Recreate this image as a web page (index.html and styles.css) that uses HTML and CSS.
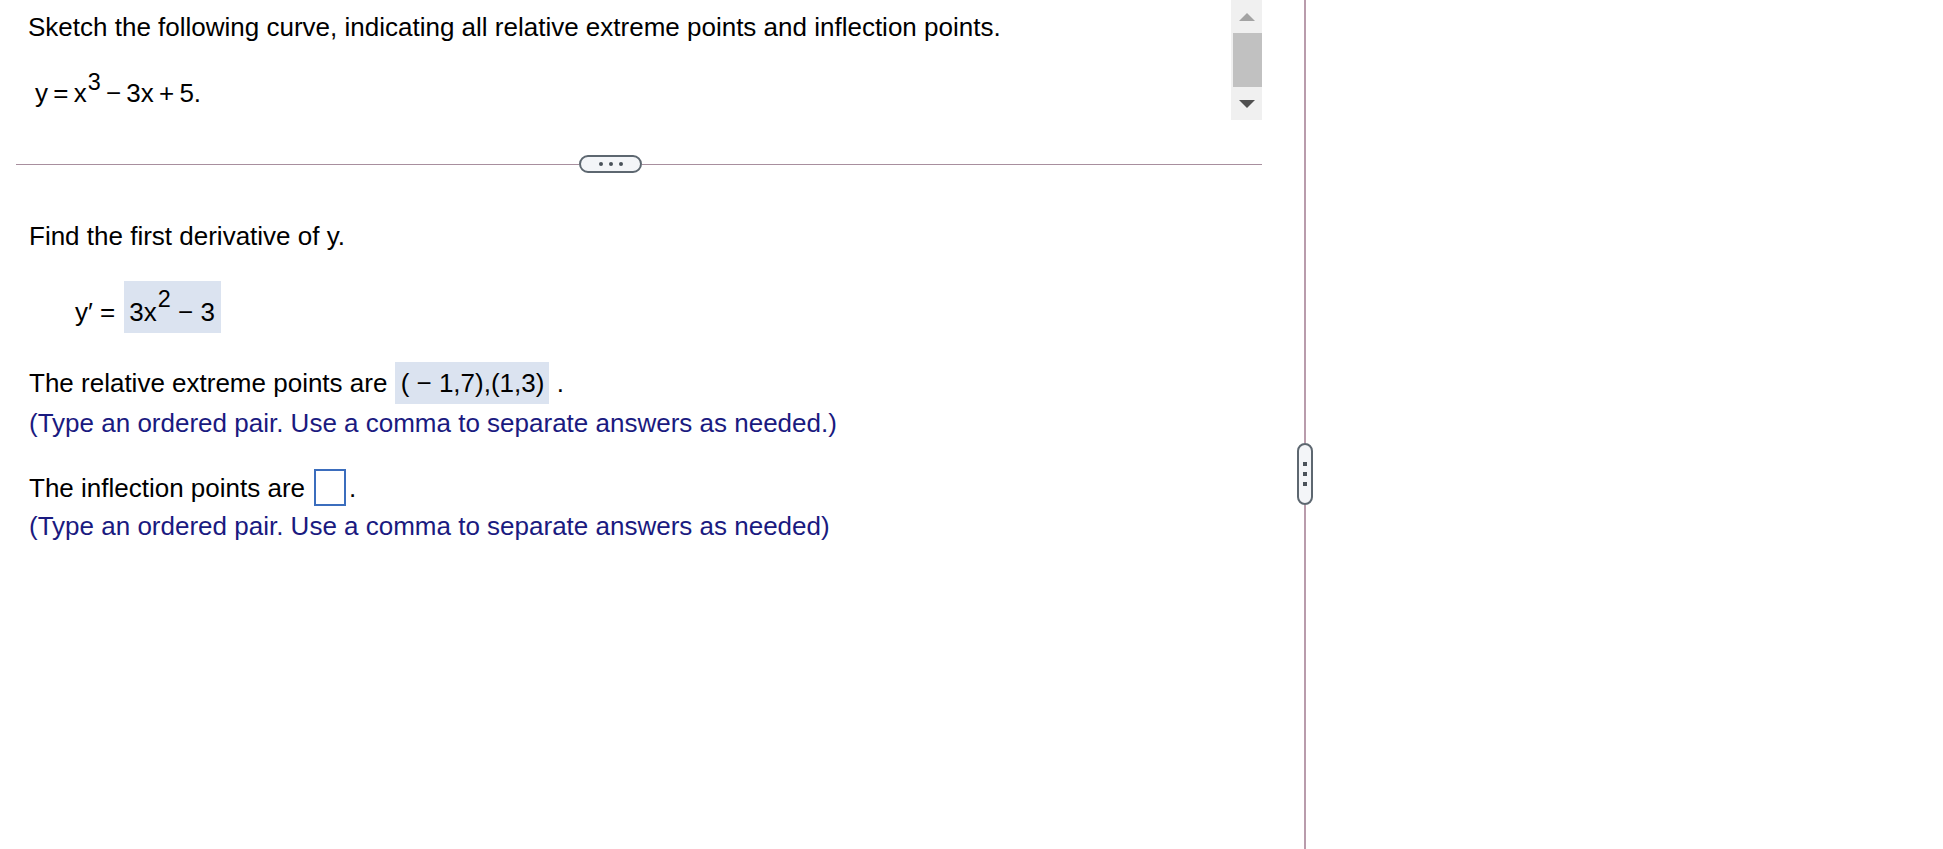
FILE: index.html
```html
<!DOCTYPE html>
<html>
<head>
<meta charset="utf-8">
<link rel="stylesheet" href="styles.css">
</head>
<body>
<div class="page">
  <div class="main">
    <div class="question">
      <div class="q-content">
        <p class="q-text">Sketch the following curve, indicating all relative extreme points and inflection points.</p>
        <p class="q-eq">y = x<sup>3</sup> − 3x + 5.</p>
      </div>
      <div class="scrollbar">
        <div class="sb-btn"><span class="arrow-up"></span></div>
        <div class="sb-thumb"></div>
        <div class="sb-btn"><span class="arrow-down"></span></div>
      </div>
    </div>
    <div class="divider">
      <div class="line line-left"></div>
      <div class="pill"><span class="dot"></span><span class="dot"></span><span class="dot"></span></div>
      <div class="line line-right"></div>
    </div>
    <div class="answers">
      <p class="a-text find">Find the first derivative of y.</p>
      <div class="deriv">
        <span class="deriv-label">y′ =</span>
        <span class="filled big">3x<sup class="sup-high">2</sup> − 3</span>
      </div>
      <p class="a-text extreme">The relative extreme points are <span class="filled">( − 1,7),(1,3)</span> .</p>
      <p class="hint hint-1">(Type an ordered pair. Use a comma to separate answers as needed.)</p>
      <div class="a-text inflect"><span>The inflection points are</span><span class="input-box"></span><span>.</span></div>
      <p class="hint hint-2">(Type an ordered pair. Use a comma to separate answers as needed)</p>
    </div>
  </div>
  <div class="rail">
    <div class="rail-line rail-top"></div>
    <div class="vpill"><span class="sq"></span><span class="sq"></span><span class="sq"></span></div>
    <div class="rail-line rail-bottom"></div>
  </div>
</div>
</body>
</html>
```
FILE: styles.css
```css
html, body {
  margin: 0;
  padding: 0;
  background: #ffffff;
}
body {
  font-family: "Liberation Sans", Arial, sans-serif;
  color: #000000;
  width: 1943px;
  height: 849px;
  overflow: hidden;
}
p { margin: 0; }
sup {
  font-size: 0.9em;
  line-height: 0;
  position: relative;
  vertical-align: baseline;
  top: -0.5em;
  margin-left: 1px;
}
.sup-high {
  top: -0.62em;
}
.page {
  display: flex;
  height: 849px;
}
.main {
  width: 1262px;
  display: flex;
  flex-direction: column;
}
.question {
  display: flex;
  height: 150px;
}
.q-content {
  flex: 1;
  padding: 12px 0 0 28px;
}
.q-text {
  font-size: 26px;
  line-height: 30px;
}
.q-eq {
  font-size: 26px;
  line-height: 30px;
  margin-top: 36px;
  padding-left: 7px;
  word-spacing: -2px;
}
.scrollbar {
  width: 31px;
  height: 120px;
  background: #f0f0f0;
  display: flex;
  flex-direction: column;
  align-items: flex-end;
}
.sb-btn {
  width: 31px;
  height: 33px;
  display: flex;
  align-items: center;
  justify-content: center;
}
.sb-thumb {
  width: 29px;
  height: 54px;
  background: #c1c1c1;
}
.arrow-up {
  width: 0; height: 0;
  border-left: 8px solid transparent;
  border-right: 8px solid transparent;
  border-bottom: 8px solid #a3a3a3;
}
.arrow-down {
  width: 0; height: 0;
  border-left: 8px solid transparent;
  border-right: 8px solid transparent;
  border-top: 8px solid #505050;
}
.divider {
  display: flex;
  align-items: center;
  margin-top: 5px;
  padding-left: 16px;
  height: 18px;
}
.line {
  height: 1px;
  background: #a88f9e;
}
.line-left { width: 563px; }
.line-right { flex: 1; }
.pill {
  width: 59px;
  height: 14px;
  border: 2px solid #5d6770;
  border-radius: 9px;
  background: #f3f5f8;
  display: flex;
  align-items: center;
  justify-content: center;
  gap: 6px;
}
.dot {
  width: 4px;
  height: 4px;
  border-radius: 50%;
  background: #4a525a;
}
.answers {
  padding-left: 29px;
  display: flex;
  flex-direction: column;
  align-items: flex-start;
}
.a-text {
  font-size: 26px;
  line-height: 30px;
}
.find {
  margin-top: 48px;
}
.deriv {
  display: flex;
  align-items: baseline;
  margin-top: 30px;
  padding-left: 46px;
  font-size: 26px;
  line-height: 30px;
}
.deriv-label {
  margin-right: 9px;
}
.filled {
  background: #dbe3f0;
  padding: 6px 5px 6px 6px;
}
.filled.big {
  display: inline-block;
  padding: 16px 6px 6px 5px;
}
.extreme {
  margin-top: 35px;
}
.hint {
  font-size: 26px;
  line-height: 30px;
  color: #1a1a80;
}
.hint-1 { margin-top: 10px; }
.hint-2 { margin-top: 5px; }
.inflect {
  margin-top: 31px;
  display: flex;
  align-items: center;
}
.input-box {
  width: 28px;
  height: 33px;
  border: 2px solid #3b6dbd;
  margin: 0 3px 0 9px;
}
.rail {
  width: 16px;
  margin-left: 35px;
  display: flex;
  flex-direction: column;
  align-items: center;
}
.rail-line {
  width: 2px;
  background: #b99cac;
}
.rail-top { height: 443px; }
.rail-bottom { flex: 1; }
.vpill {
  width: 12px;
  height: 58px;
  border: 2px solid #5d6770;
  border-radius: 9px;
  background: #f3f5f8;
  display: flex;
  flex-direction: column;
  align-items: center;
  justify-content: center;
  gap: 6px;
}
.sq {
  width: 4px;
  height: 4px;
  background: #4a525a;
}
```
